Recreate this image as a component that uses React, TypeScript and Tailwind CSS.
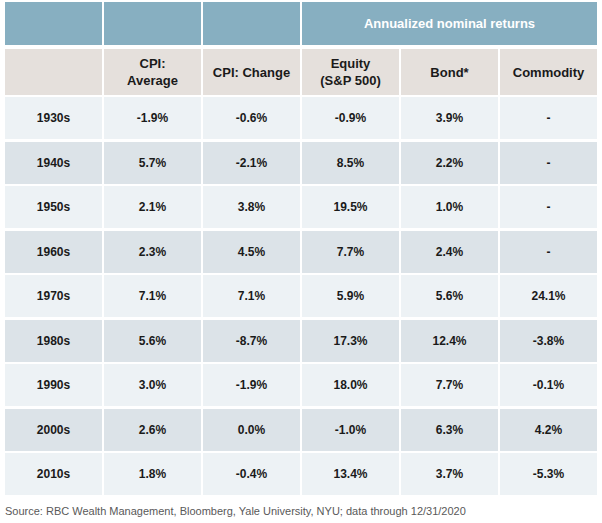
import React from "react";

const rows = [
  ["1930s", "-1.9%", "-0.6%", "-0.9%", "3.9%", "-"],
  ["1940s", "5.7%", "-2.1%", "8.5%", "2.2%", "-"],
  ["1950s", "2.1%", "3.8%", "19.5%", "1.0%", "-"],
  ["1960s", "2.3%", "4.5%", "7.7%", "2.4%", "-"],
  ["1970s", "7.1%", "7.1%", "5.9%", "5.6%", "24.1%"],
  ["1980s", "5.6%", "-8.7%", "17.3%", "12.4%", "-3.8%"],
  ["1990s", "3.0%", "-1.9%", "18.0%", "7.7%", "-0.1%"],
  ["2000s", "2.6%", "0.0%", "-1.0%", "6.3%", "4.2%"],
  ["2010s", "1.8%", "-0.4%", "13.4%", "3.7%", "-5.3%"],
];

const heads = [
  ["", ""],
  ["CPI:", "Average"],
  ["CPI: Change"],
  ["Equity", "(S&P 500)"],
  ["Bond*"],
  ["Commodity"],
];

export default function App() {
  return (
    <div
      className="w-[602px] h-[523px] bg-white px-[5px] pt-[2px]"
      style={{ fontFamily: '"Liberation Sans", Arial, sans-serif' }}
    >
      <div className="w-[592px]">
        {/* top band */}
        <div className="grid grid-cols-[97px_97px_97px_1fr] gap-x-[2px] h-[43px]">
          <div className="bg-[#87afc1]" />
          <div className="bg-[#87afc1]" />
          <div className="bg-[#87afc1]" />
          <div className="bg-[#87afc1] flex items-center justify-center text-white font-bold text-[13px]">
            Annualized nominal returns
          </div>
        </div>

        {/* column headings */}
        <div className="grid grid-cols-6 gap-x-[2px] h-[46px] mt-[4px]">
          {heads.map((h, i) => (
            <div
              key={i}
              className="bg-[#e5e0dc] flex flex-col items-center justify-center text-[#1a1a1a] font-bold text-[13px] leading-[17px]"
            >
              {h.map((l, j) => (
                <span key={j}>{l}</span>
              ))}
            </div>
          ))}
        </div>

        {/* data */}
        <div className="flex flex-col gap-y-[2.5px] mt-[2px]">
          {rows.map((r, i) => (
            <div key={r[0]} className="grid grid-cols-6 gap-x-[2px] h-[42px]">
              {r.map((c, j) => (
                <div
                  key={j}
                  className={
                    (i % 2 === 0 ? "bg-[#edf2f5]" : "bg-[#dce3e8]") +
                    " flex items-center justify-center text-[12px] font-bold text-[#1a1a1a]"
                  }
                >
                  {c}
                </div>
              ))}
            </div>
          ))}
        </div>

        <p className="mt-[9px] text-[11px] text-[#595959] leading-[14px]">
          Source: RBC Wealth Management, Bloomberg, Yale University, NYU; data through 12/31/2020
        </p>
      </div>
    </div>
  );
}
